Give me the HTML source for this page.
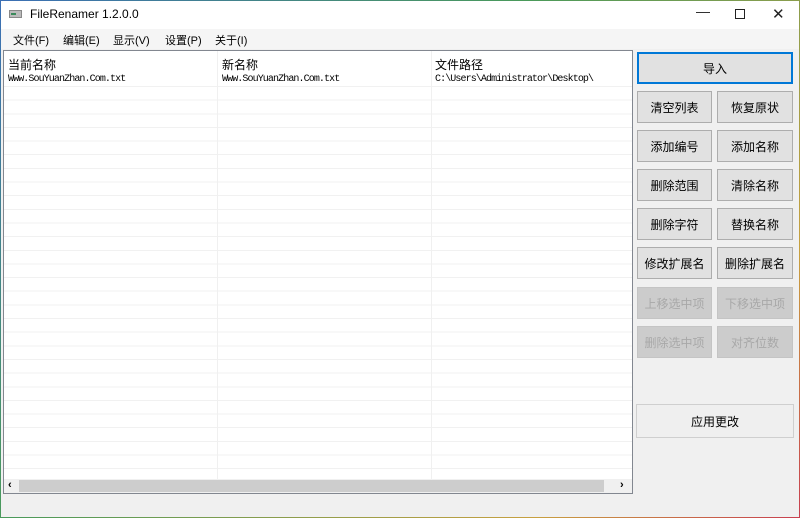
<!DOCTYPE html>
<html><head><meta charset="utf-8"><style>
*{margin:0;padding:0;box-sizing:border-box}
body{width:800px;height:518px;overflow:hidden;background:#f0f0f0;font-family:"Liberation Sans","Noto Sans CJK SC",sans-serif;font-size:12px;color:#000;position:relative}
.frame{position:absolute;inset:0;border:1px solid;border-image:linear-gradient(135deg,#3b6fb5,#4a9a5a 40%,#c8a040 80%,#c84050) 1;pointer-events:none;z-index:9}
.title{position:absolute;left:0;top:0;width:800px;height:29px;background:#fff}
.title .t{position:absolute;left:30px;top:7px;font-size:12px}
.icon{position:absolute;left:9px;top:10px;width:13px;height:8px;background:#bbb;border:1px solid #888}
.icon:after{content:"";position:absolute;left:1px;top:2px;width:5px;height:2px;background:#3a8a5a}
.ctl{position:absolute;top:6px;font-size:14px;color:#222}
.menu{position:absolute;left:0;top:29px;width:800px;height:20px;background:#f5f5f5}
.menu span{position:absolute;top:3px;font-size:11px}
.list{position:absolute;left:3px;top:50px;width:630px;height:444px;background:#fff;border:1px solid #828790;overflow:hidden}
.rows{position:absolute;left:0;top:35px;width:628px;height:393px;background:repeating-linear-gradient(to bottom,#f1f1f1 0 1px,transparent 1px 13.65px)}
.col{position:absolute;top:0;width:1px;height:428px;background:#f0f0f0}
.hd{position:absolute;top:5px;font-size:12px}
.mono{position:absolute;top:23px;font-family:"Liberation Mono",monospace;font-size:10px;letter-spacing:-0.9px}
.sb{position:absolute;left:0;top:428px;width:628px;height:14px;background:#f0f0f0}
.thumb{position:absolute;left:15px;top:1px;width:585px;height:12px;background:#cdcdcd}
.btn{position:absolute;background:#e1e1e1;border:1px solid #adadad;text-align:center;font-size:12px;display:flex;align-items:center;justify-content:center}
.dis{background:#cccccc;border-color:#c4c4c4;color:#a8a8a8}
</style></head><body>
<div class="frame"></div>
<div class="title"><div class="icon"></div><div class="t">FileRenamer 1.2.0.0</div>
<div class="ctl" style="left:696px;top:3px">&#8212;</div>
<div style="position:absolute;left:735px;top:9px;width:10px;height:10px;border:1px solid #222"></div>
<div class="ctl" style="left:772px;top:5px;font-size:15px">&#10005;</div></div>
<div class="menu"><span style="left:13px">文件(F)</span><span style="left:63px">编辑(E)</span><span style="left:113px">显示(V)</span><span style="left:165px">设置(P)</span><span style="left:215px">关于(I)</span></div>
<div class="list">
<div class="rows"></div>
<div class="col" style="left:213px"></div><div class="col" style="left:427px"></div>
<div class="hd" style="left:4px">当前名称</div><div class="hd" style="left:218px">新名称</div><div class="hd" style="left:431px">文件路径</div>
<div class="mono" style="left:4px">Www.SouYuanZhan.Com.txt</div>
<div class="mono" style="left:218px">Www.SouYuanZhan.Com.txt</div>
<div class="mono" style="left:431px">C:\Users\Administrator\Desktop\</div>
<div class="sb"><span style="position:absolute;left:4px;top:0;font-size:11px;font-weight:bold">&#8249;</span><div class="thumb"></div><span style="position:absolute;left:616px;top:0;font-size:11px;font-weight:bold">&#8250;</span></div>
</div>
<div class="btn" style="left:637px;top:52px;width:156px;height:32px;border:2px solid #0078d7">导入</div>
<div class="btn" style="left:637px;top:91px;width:75px;height:32px">清空列表</div>
<div class="btn" style="left:717px;top:91px;width:76px;height:32px">恢复原状</div>
<div class="btn" style="left:637px;top:130px;width:75px;height:32px">添加编号</div>
<div class="btn" style="left:717px;top:130px;width:76px;height:32px">添加名称</div>
<div class="btn" style="left:637px;top:169px;width:75px;height:32px">删除范围</div>
<div class="btn" style="left:717px;top:169px;width:76px;height:32px">清除名称</div>
<div class="btn" style="left:637px;top:208px;width:75px;height:32px">删除字符</div>
<div class="btn" style="left:717px;top:208px;width:76px;height:32px">替换名称</div>
<div class="btn" style="left:637px;top:247px;width:75px;height:32px">修改扩展名</div>
<div class="btn" style="left:717px;top:247px;width:76px;height:32px">删除扩展名</div>
<div class="btn dis" style="left:637px;top:287px;width:75px;height:32px">上移选中项</div>
<div class="btn dis" style="left:717px;top:287px;width:76px;height:32px">下移选中项</div>
<div class="btn dis" style="left:637px;top:326px;width:75px;height:32px">删除选中项</div>
<div class="btn dis" style="left:717px;top:326px;width:76px;height:32px">对齐位数</div>
<div class="btn" style="left:636px;top:404px;width:158px;height:34px;background:#efefef;border-color:#cfcfcf">应用更改</div>
</body></html>
